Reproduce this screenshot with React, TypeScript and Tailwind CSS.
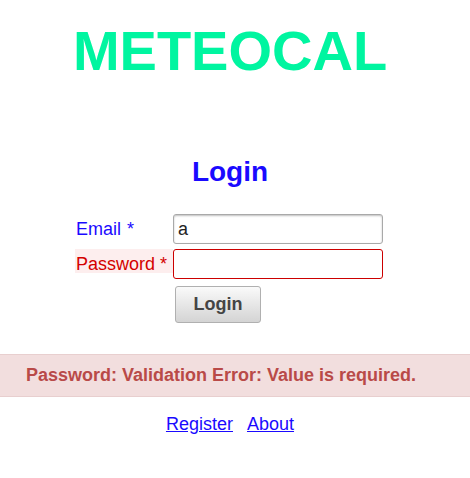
import { useState } from 'react'

export default function App() {
  const [email, setEmail] = useState('a')
  const [password, setPassword] = useState('')

  return (
    <div className="w-[470px] h-[478px] bg-white font-['Liberation_Sans',Arial,sans-serif]">
      <div className="w-[460px] text-center">
        <h1 className="pt-[23px] text-[56px] leading-[56px] font-bold text-[#00f5a0]">METEOCAL</h1>
        <h2 className="mt-[79px] text-[28px] leading-[28px] font-bold text-[#1a0aff]">Login</h2>
      </div>

      <form onSubmit={(e) => e.preventDefault()} className="mt-[28px] ml-[75px] flex flex-col">
        <div className="flex">
          <label className="w-[98px] h-[24px] pt-[5px] pl-[1px] text-[18px] leading-[20px] text-[#1a0aff]">
            Email<span className="ml-[6px]">*</span>
          </label>
          <input value={email} onChange={(e) => setEmail(e.target.value)}
            className="w-[210px] h-[30px] px-[4px] text-[18px] text-[#222] border border-[#a9a9a9] rounded-[3px] shadow-[inset_0_1px_2px_rgba(0,0,0,0.25)] outline-none" />
        </div>
        <div className="flex mt-[5px]">
          <label className="w-[98px] h-[24px] pt-[5px] pl-[1px] text-[18px] leading-[20px] text-[#d40000] bg-[#fdeeee]">
            Password<span className="ml-[5px]">*</span>
          </label>
          <input type="password" value={password} onChange={(e) => setPassword(e.target.value)}
            className="w-[210px] h-[30px] px-[4px] text-[18px] border border-[#cc0000] rounded-[3px] outline-none" />
        </div>
        <div className="flex mt-[7px] pl-[100px]">
          <button type="submit"
            className="w-[86px] h-[37px] text-[18px] font-bold text-[#444] border border-[#b0b0b0] rounded-[3px] bg-gradient-to-b from-[#fafafa] to-[#d4d4d4]">
            Login
          </button>
        </div>
      </form>

      <div className="mt-[31px] h-[43px] flex items-center pl-[26px] bg-[#f2dede] border-y border-[#e8cfcf] text-[18px] font-bold text-[#b94a48]">
        Password: Validation Error: Value is required.
      </div>

      <div className="w-[460px] mt-[17px] flex justify-center gap-[14px] text-[18px] leading-[20px]">
        <a href="#" className="text-[#1a0aff] underline">Register</a>
        <a href="#" className="text-[#1a0aff] underline">About</a>
      </div>
    </div>
  )
}
